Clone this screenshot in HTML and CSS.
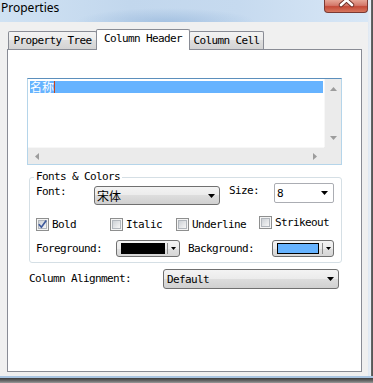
FILE: index.html
```html
<!DOCTYPE html>
<html lang="en">
<head>
  <meta charset="UTF-8" />
  <title>Properties</title>
  <link rel="stylesheet" href="styles.css">
</head>
<body>

<div class="window">
  <div class="window-row">
    <div class="window-main">

      <div class="titlebar">
        <span class="title">Properties</span>
        <div class="close-btn">
          <svg width="42" height="12" viewBox="0 0 42 12">
            <path d="M16 -5 L27 5 M27 -5 L16 5" stroke="#6b2c24" stroke-width="4.4" stroke-linecap="round" fill="none"/>
            <path d="M16 -5 L27 5 M27 -5 L16 5" stroke="#fff" stroke-width="2.6" stroke-linecap="round" fill="none"/>
          </svg>
        </div>
      </div>

      <div class="client">
        <div class="tabs">
          <div class="tab tab-tree">Property Tree</div>
          <div class="tab tab-header active">Column Header</div>
          <div class="tab tab-cell">Column Cell</div>
        </div>

        <div class="panel">
          <div class="listbox">
            <div class="list-main">
              <div class="list-content">
                <div class="list-row"><span class="list-text">名称</span></div>
              </div>
              <div class="vscroll">
                <svg width="7" height="4" viewBox="0 0 7 4"><polygon points="0,4 3.5,0 7,4" fill="#9c9c9c"/></svg>
                <svg width="7" height="4" viewBox="0 0 7 4"><polygon points="0,0 7,0 3.5,4" fill="#9c9c9c"/></svg>
              </div>
            </div>
            <div class="hscroll-row">
              <div class="hscroll">
                <svg width="4" height="7" viewBox="0 0 4 7"><polygon points="4,0 4,7 0,3.5" fill="#9c9c9c"/></svg>
                <svg width="4" height="7" viewBox="0 0 4 7"><polygon points="0,0 0,7 4,3.5" fill="#9c9c9c"/></svg>
              </div>
              <div class="scroll-corner"></div>
            </div>
          </div>

          <fieldset class="group">
            <legend>Fonts &amp; Colors</legend>

            <div class="font-row">
              <span class="label label-font">Font:</span>
              <div class="combo combo-font">
                <span class="cjk">宋体</span>
                <svg width="7" height="4" viewBox="0 0 7 4"><polygon points="0,0 7,0 3.5,4" fill="#000"/></svg>
              </div>
              <span class="label label-size">Size:</span>
              <div class="combo-edit combo-size">
                <span>8</span>
                <svg width="7" height="4" viewBox="0 0 7 4"><polygon points="0,0 7,0 3.5,4" fill="#000"/></svg>
              </div>
            </div>

            <div class="check-row">
              <div class="check-item item-bold">
                <span class="check"><span class="check-box">
                  <svg width="7" height="7" viewBox="0 0 7 7"><path d="M-0.2 3.2 L2.4 6.2 L7.2 -0.6" stroke="#3e5a9c" stroke-width="1.7" fill="none"/></svg>
                </span></span>Bold
              </div>
              <div class="check-item item-italic">
                <span class="check"><span class="check-box"></span></span>Italic
              </div>
              <div class="check-item item-under">
                <span class="check"><span class="check-box"></span></span>Underline
              </div>
              <div class="check-item item-strike">
                <span class="check"><span class="check-box"></span></span>Strikeout
              </div>
            </div>

            <div class="color-row">
              <span class="label label-fg">Foreground:</span>
              <div class="color-btn color-fg">
                <span class="swatch swatch-black"></span>
                <span class="sep"></span>
                <span class="color-arrow"><svg width="5" height="3" viewBox="0 0 5 3"><polygon points="0,0 5,0 2.5,3" fill="#000"/></svg></span>
              </div>
              <span class="label label-bg">Background:</span>
              <div class="color-btn color-bg">
                <span class="swatch swatch-blue"></span>
                <span class="sep"></span>
                <span class="color-arrow"><svg width="5" height="3" viewBox="0 0 5 3"><polygon points="0,0 5,0 2.5,3" fill="#000"/></svg></span>
              </div>
            </div>
          </fieldset>

          <div class="align-row">
            <span class="label label-align">Column Alignment:</span>
            <div class="combo combo-align">
              <span>Default</span>
              <svg width="7" height="4" viewBox="0 0 7 4"><polygon points="0,0 7,0 3.5,4" fill="#000"/></svg>
            </div>
          </div>
        </div>
      </div>

    </div>
    <div class="frame-right"></div>
  </div>
  <div class="frame-bottom"></div>
</div>

</body>
</html>
```

FILE: styles.css
```css
* {
  box-sizing: border-box;
}

body {
  margin: 0;
  width: 373px;
  height: 383px;
  overflow: hidden;
  background: #f0f0f0;
  font-family: "DejaVu Sans Mono", monospace;
  font-size: 11px;
  letter-spacing: -0.62px;
  color: #000;
}

svg {
  display: block;
  overflow: visible;
}

/* window frame */
.window {
  display: flex;
  flex-direction: column;
  height: 383px;
}

.window-row {
  flex: 1;
  display: flex;
}

.window-main {
  flex: 1;
  display: flex;
  flex-direction: column;
}

.frame-right {
  width: 6px;
  background: linear-gradient(to right, #dfe8f2 0, #eaf0f7 3px, #6a6a6a 3px, #454545 6px);
}

.frame-bottom {
  height: 7px;
  border-top: 2px solid #a9c5e2;
  background: linear-gradient(#3c3c3c, #6c6c6c 60%, #9a9a9a);
}

.titlebar {
  height: 22px;
  display: flex;
  justify-content: space-between;
  align-items: flex-start;
  background:
    radial-gradient(ellipse 90px 14px at 45% 100%, rgba(140, 175, 215, 0.55), rgba(140, 175, 215, 0)),
    linear-gradient(to right, #d0e2f3 0%, #c2d7ed 35%, #c6daef 65%, #d8e7f6 100%);
}

.title {
  font-family: "Noto Sans", sans-serif;
  letter-spacing: 0;
  font-size: 12px;
  line-height: 15px;
  padding-left: 1px;
}

.close-btn {
  width: 44px;
  height: 13px;
  border: 1px solid #7b3a33;
  border-top: none;
  border-radius: 0 0 4px 4px;
  background: linear-gradient(#e6a596, #d4786a 45%, #c44a38 55%, #d7775f);
  overflow: hidden;
}

/* client area */
.client {
  flex: 1;
  display: flex;
  flex-direction: column;
  padding: 7px 6px 4px 7px;
}

.tabs {
  display: flex;
  align-items: flex-end;
  height: 20px;
  padding-left: 1px;
}

.tab {
  height: 18px;
  border: 1px solid #898c95;
  border-bottom: none;
  border-radius: 2px 2px 0 0;
  background: linear-gradient(#f3f3f3, #ebebeb 50%, #dedede 50%, #d3d3d3);
  line-height: 17px;
  text-align: center;
  white-space: nowrap;
}

.tab-tree {
  width: 89px;
}

.tab-header {
  width: 94px;
  margin-left: -1px;
}

.tab-cell {
  width: 75px;
  margin-left: -1px;
}

.tab.active {
  height: 21px;
  margin-bottom: -1px;
  background: #fff;
  line-height: 18px;
  z-index: 1;
}

.panel {
  flex: 1;
  border: 1px solid #898c95;
  background: #fff;
  padding: 28px 19px 0 19px;
}

/* list box */
.listbox {
  height: 87px;
  border: 1px solid #b5d5ea;
  border-top-color: #5b8fbc;
  display: flex;
  flex-direction: column;
}

.list-main {
  flex: 1;
  display: flex;
}

.list-content {
  flex: 1;
  padding: 2px 1px 0 2px;
}

.list-row {
  height: 12px;
  background: #66b3ff;
}

.list-text {
  display: inline-block;
  vertical-align: top;
  height: 12px;
  font-family: "Noto Sans CJK SC", sans-serif;
  font-size: 12px;
  letter-spacing: 0;
  line-height: 12px;
  color: #fff;
  border-right: 1px solid #c8461c;
}

.vscroll {
  width: 17px;
  background: #ebebeb;
  border-left: 1px solid #f7f7f7;
  display: flex;
  flex-direction: column;
  justify-content: space-between;
  align-items: center;
  padding: 8px 0 7px;
}

.hscroll-row {
  height: 17px;
  display: flex;
}

.hscroll {
  flex: 1;
  background: #ebebeb;
  border-top: 1px solid #f7f7f7;
  display: flex;
  justify-content: space-between;
  align-items: center;
  padding: 0 7px;
}

.scroll-corner {
  width: 17px;
  background: #ebebeb;
}

/* fonts & colors group */
.group {
  margin: 6px 0 0 2px;
  width: 313px;
  min-width: 0;
  padding: 0 4px 5px 4px;
  border: 1px solid #d5dfe5;
  border-radius: 3px;
}

.group legend {
  padding: 0 2px;
  line-height: 12px;
}

.label {
  white-space: nowrap;
  line-height: 12px;
}

.cjk {
  font-family: "Noto Sans CJK SC", sans-serif;
  font-size: 12px;
  letter-spacing: 0;
}

.font-row {
  display: flex;
  align-items: flex-start;
  padding-left: 2px;
}

.label-font {
  width: 58px;
  margin-top: 3px;
}

.label-size {
  width: 45px;
  margin-left: 9px;
  margin-top: 2px;
}

.combo {
  display: flex;
  align-items: center;
  justify-content: space-between;
  border: 1px solid #707070;
  border-radius: 3px;
  background: linear-gradient(#f3f3f3, #ebebeb 50%, #dddddd 50%, #d0d0d0);
}

.combo-font {
  width: 126px;
  height: 19px;
  margin-top: 3px;
  padding: 0 4px 0 2px;
}

.combo-edit {
  display: flex;
  align-items: center;
  justify-content: space-between;
  border: 1px solid #abadb3;
  border-radius: 2px;
  background: #fff;
}

.combo-size {
  width: 60px;
  height: 20px;
  padding: 0 5px 0 2px;
}

.check-row {
  display: flex;
  align-items: flex-start;
  margin-top: 13px;
  padding-left: 2px;
}

.check-item {
  display: flex;
  align-items: center;
  height: 13px;
  line-height: 13px;
  white-space: nowrap;
}

.item-bold {
  width: 74px;
}

.item-italic {
  width: 66px;
}

.item-under {
  width: 83px;
}

.item-strike {
  margin-top: -2px;
}

.check {
  width: 13px;
  height: 13px;
  margin-right: 3px;
  padding: 1px;
  border: 1px solid #8e8f8f;
  background: #f4f4f4;
}

.check-box {
  display: block;
  width: 9px;
  height: 9px;
  border: 1px solid #b2b7bd;
  background: linear-gradient(135deg, #cdd1d6, #f6f6f6);
}

.color-row {
  display: flex;
  align-items: center;
  margin-top: 9px;
  padding-left: 2px;
}

.label-fg {
  width: 80px;
}

.label-bg {
  width: 84px;
  margin-left: 8px;
}

.color-btn {
  display: flex;
  align-items: center;
  height: 17px;
  padding-left: 4px;
  border: 1px solid #707070;
  border-radius: 3px;
  background: linear-gradient(#f4f4f4, #ececec 50%, #e0e0e0 50%, #d6d6d6);
}

.color-fg {
  width: 64px;
}

.color-bg {
  width: 62px;
}

.swatch {
  width: 44px;
  height: 11px;
  border: 1px solid #000;
}

.swatch-black {
  background: #000;
}

.swatch-blue {
  width: 42px;
  background: #66b3ff;
}

.sep {
  width: 1px;
  height: 11px;
  margin-left: 2px;
  background: #8d8d8d;
}

.color-bg .sep {
  margin-left: 3px;
}

.color-arrow {
  flex: 1;
  display: flex;
  justify-content: center;
}

/* alignment row */
.align-row {
  display: flex;
  align-items: center;
  margin: 6px 0 0 2px;
}

.label-align {
  width: 134px;
}

.combo-align {
  width: 176px;
  height: 20px;
  padding: 0 4px 0 3px;
}
```
